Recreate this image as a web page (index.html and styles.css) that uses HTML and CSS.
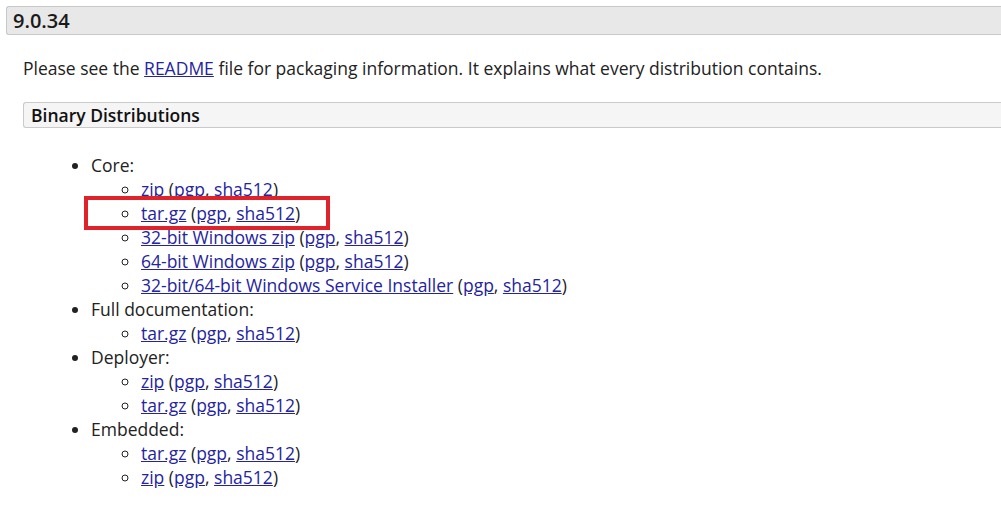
FILE: index.html
```html
<!DOCTYPE html>
<html>
<head>
<meta charset="utf-8">
<link rel="stylesheet" href="styles.css">
</head>
<body>
<div class="section">
  <h3 class="version">9.0.34</h3>
  <div class="body">
    <p class="intro">Please see the <a href="#">README</a> file for packaging information. It explains what every distribution contains.</p>
    <div class="sub">
      <h4 class="subhead">Binary Distributions</h4>
      <ul class="outer">
        <li>Core:
          <ul class="inner">
            <li><a href="#">zip</a> (<a href="#">pgp</a>, <a href="#">sha512</a>)</li>
            <li class="marked"><a href="#">tar.gz</a> (<a href="#">pgp</a>, <a href="#">sha512</a>)<span class="redbox"></span></li>
            <li><a href="#">32-bit Windows zip</a> (<a href="#">pgp</a>, <a href="#">sha512</a>)</li>
            <li><a href="#">64-bit Windows zip</a> (<a href="#">pgp</a>, <a href="#">sha512</a>)</li>
            <li><a href="#">32-bit/64-bit Windows Service Installer</a> (<a href="#">pgp</a>, <a href="#">sha512</a>)</li>
          </ul>
        </li>
        <li>Full documentation:
          <ul class="inner">
            <li><a href="#">tar.gz</a> (<a href="#">pgp</a>, <a href="#">sha512</a>)</li>
          </ul>
        </li>
        <li>Deployer:
          <ul class="inner">
            <li><a href="#">zip</a> (<a href="#">pgp</a>, <a href="#">sha512</a>)</li>
            <li><a href="#">tar.gz</a> (<a href="#">pgp</a>, <a href="#">sha512</a>)</li>
          </ul>
        </li>
        <li>Embedded:
          <ul class="inner">
            <li><a href="#">tar.gz</a> (<a href="#">pgp</a>, <a href="#">sha512</a>)</li>
            <li><a href="#">zip</a> (<a href="#">pgp</a>, <a href="#">sha512</a>)</li>
          </ul>
        </li>
      </ul>
    </div>
  </div>
</div>
</body>
</html>
```
FILE: styles.css
```css
html, body {
  margin: 0;
  padding: 0;
  background: #fff;
}
body {
  font-family: "Open Sans", "Liberation Sans", sans-serif;
  font-size: 17.5px;
  color: #222;
}
.section {
  padding: 6px 0 0 6px;
}
.version {
  margin: 0;
  height: 27px;
  line-height: 27px;
  padding-left: 6px;
  font-size: 20px;
  font-weight: 600;
  color: #1a1a1a;
  background: #e8e8e8;
  border: 1px solid #c8c8c8;
  border-right: none;
  border-radius: 3px 0 0 3px;
}
.body {
  padding-left: 17px;
}
.intro {
  margin: 21px 0 0 0;
  line-height: 24px;
}
a {
  color: #2424a0;
  text-decoration: underline;
}
.subhead {
  margin: 22px 0 0 0;
  height: 24px;
  line-height: 24px;
  padding-left: 7px;
  font-size: 17.5px;
  font-weight: 600;
  color: #111;
  background: #f5f5f5;
  border: 1px solid #cacaca;
  border-right: none;
  border-radius: 3px 0 0 3px;
}
.outer {
  margin: 25px 0 0 0;
  padding-left: 68px;
  list-style: disc;
  line-height: 24px;
}
.inner {
  margin: 0;
  padding-left: 50px;
  list-style: circle;
}
.marked {
  position: relative;
}
.redbox {
  position: absolute;
  left: -57px;
  top: -5px;
  width: 238px;
  height: 26px;
  border: 4px solid #e0222a;
}
```
